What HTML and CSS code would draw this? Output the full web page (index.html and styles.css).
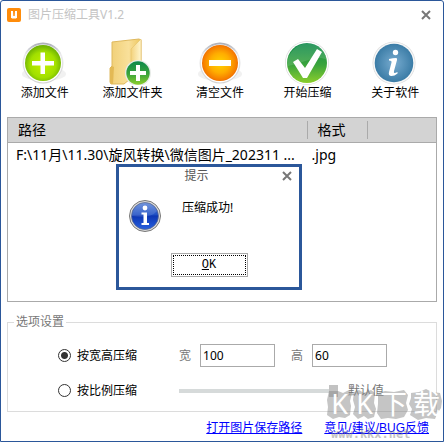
FILE: index.html
```html
<!DOCTYPE html>
<html lang="zh-CN">
<head>
<meta charset="utf-8">
<title>图片压缩工具V1.2</title>
<link rel="stylesheet" href="styles.css">
</head>
<body>
<main class="window">
  <header class="titlebar">
    <svg class="logo" viewBox="0 0 14 14" aria-hidden="true"><rect width="14" height="14" rx="2" fill="#ff8c0a"/><path d="M4 3h6v6.500l-1 1H5l-1-1z" fill="#fff"/><path d="M6 3h2l-.3 5H6.300z" fill="#ff8c0a"/></svg>
    <h1 class="title">图片压缩工具V1.2</h1>
    <button class="close" aria-label="关闭"><svg viewBox="0 0 10 10"><path d="M1 1l8 8M9 1L1 9" stroke="#777" stroke-width="2"/></svg></button>
  </header>

  <nav class="toolbar">
    <button class="tool">
      <svg class="tool-icon" viewBox="0 0 48 48" aria-hidden="true">
        <defs>
          <radialGradient id="lime" cx=".5" cy=".55" r=".55"><stop offset="0" stop-color="#c4f000"/><stop offset=".65" stop-color="#a2e000"/><stop offset="1" stop-color="#69ad05"/></radialGradient>
          <linearGradient id="rim" x1="0" y1="0" x2="0" y2="1"><stop offset="0" stop-color="#a9acb5"/><stop offset=".3" stop-color="#ececee"/><stop offset="1" stop-color="#d2d2d2"/></linearGradient>
        </defs>
        <ellipse cx="23" cy="37" rx="22" ry="7" fill="#f1f1f1"/>
        <circle cx="22" cy="26" r="20.500" fill="url(#rim)"/><circle cx="22" cy="26.500" r="19" fill="#fff"/>
        <circle cx="22" cy="26" r="18" fill="url(#lime)"/>
        <path d="M19.500 15.500h4.500v8.500H33v4.500h-9V37h-4.500v-8.500H11V24h8.500z" fill="#fff"/>
      </svg>
      <span>添加文件</span>
    </button>
    <button class="tool">
      <svg class="tool-icon" viewBox="0 0 48 48" aria-hidden="true">
        <defs>
          <linearGradient id="folder"><stop offset="0" stop-color="#f0cf76"/><stop offset=".6" stop-color="#f9e09a"/><stop offset="1" stop-color="#edc75f"/></linearGradient>
          <linearGradient id="flap"><stop offset="0" stop-color="#f3d27c"/><stop offset="1" stop-color="#fff6cf"/></linearGradient>
          <linearGradient id="green" x1="0" y1="0" x2="0" y2="1"><stop offset="0" stop-color="#0c884b"/><stop offset=".55" stop-color="#3ba43c"/><stop offset="1" stop-color="#8bce2c"/></linearGradient>
        </defs>
        <path d="M4 5l27-3 2 1v30L16 47H3l-1-2V31l2-2z" fill="url(#folder)" stroke="#dfb95e"/>
        <path d="M23 12L33 2v28l-10 9z" fill="url(#flap)" stroke="#e4c169" stroke-width=".6"/>
        <path d="M2 31l2-2 2 1-1 17H3l-1-2z" fill="#e3b955"/>
        <circle cx="30" cy="36" r="13" fill="#e7ebe7"/><circle cx="30" cy="36" r="11.700" fill="url(#green)"/>
        <path d="M28 28h4v6h6v4h-6v6h-4v-6h-6v-4h6z" fill="#fff"/>
      </svg>
      <span>添加文件夹</span>
    </button>
    <button class="tool">
      <svg class="tool-icon" viewBox="0 0 48 48" aria-hidden="true">
        <defs><radialGradient id="orange" cx=".5" cy=".5" r=".55"><stop offset="0" stop-color="#ffd400"/><stop offset=".5" stop-color="#ffad00"/><stop offset=".85" stop-color="#f67c00"/><stop offset="1" stop-color="#d95700"/></radialGradient></defs>
        <ellipse cx="24" cy="37" rx="22" ry="7" fill="#f1f1f1"/>
        <circle cx="24" cy="26" r="20.500" fill="url(#rim)"/><circle cx="24" cy="26.500" r="19" fill="#fff"/>
        <circle cx="24" cy="26" r="18" fill="url(#orange)"/>
        <path d="M13 23h22v6H13z" fill="#fff"/>
      </svg>
      <span>清空文件</span>
    </button>
    <button class="tool">
      <svg class="tool-icon" viewBox="0 0 48 48" aria-hidden="true">
        <circle cx="23" cy="26" r="22" fill="#ddd"/><circle cx="23" cy="26" r="21.300" fill="#fff"/>
        <circle cx="23" cy="26" r="20" fill="url(#green)"/>
        <path d="M3 26C5 14 13 7 24 6c11 1 17 8 19 17-11-6-24 4-39 6z" fill="#fff" opacity=".13"/>
        <path d="M9 25l5-3 7 9 12-19 5 3-15 26h-4z" fill="#fff"/>
      </svg>
      <span>开始压缩</span>
    </button>
    <button class="tool">
      <svg class="tool-icon" viewBox="0 0 48 48" aria-hidden="true">
        <defs><radialGradient id="steel"><stop offset="0" stop-color="#78acd0"/><stop offset="1" stop-color="#3b7ca6"/></radialGradient></defs>
        <circle cx="23" cy="26" r="21.500" fill="#ddd"/><circle cx="23" cy="26" r="20.800" fill="#f8f8f8"/>
        <circle cx="23" cy="26" r="19.300" fill="url(#steel)"/>
        <circle cx="24.500" cy="15.500" r="2.700" fill="#fff"/>
        <path d="M18 22q4-1 7-1 1.500 0 1 2l-3 11q-.5 2.500 1 2l2.500-1v1.500q-3 2.500-6 2.500-3.500 0-2.500-4l2.500-9.500q.5-2-2.500-2z" fill="#fff"/>
      </svg>
      <span>关于软件</span>
    </button>
  </nav>

  <section class="files">
    <table class="file-table">
      <thead><tr><th class="col-path"><span>路径</span></th><th class="col-format"><span>格式</span></th><th></th></tr></thead>
      <tbody><tr><td>F:\11月\11.30\旋风转换\微信图片_202311 ...</td><td class="format">.jpg</td><td></td></tr></tbody>
    </table>
  </section>

  <fieldset class="options">
    <legend>选项设置</legend>
    <div class="option-row">
      <label class="mode"><input type="radio" name="mode" checked>按宽高压缩</label>
      <label class="dimension">宽<input type="text" value="100"></label>
      <label class="dimension">高<input type="text" value="60"></label>
    </div>
    <div class="option-row">
      <label class="mode"><input type="radio" name="mode">按比例压缩</label>
      <input class="ratio" type="range" min="0" max="100" value="100" aria-label="比例">
      <span class="default">默认值</span>
    </div>
  </fieldset>

  <footer class="links"><a href="#path">打开图片保存路径</a><a href="#feedback">意见/建议/BUG反馈</a></footer>

  <section class="dialog" role="dialog" aria-labelledby="dialog-title">
    <header class="dialog-head">
      <h2 id="dialog-title">提示</h2>
      <button class="close" aria-label="关闭提示"><svg viewBox="0 0 10 10"><path d="M1 1l8 8M9 1L1 9" stroke="#777" stroke-width="2"/></svg></button>
    </header>
    <div class="dialog-body">
      <svg class="info" viewBox="0 0 32 32" aria-hidden="true">
        <defs><linearGradient id="blue" x1="0" y1="0" x2="0" y2="1"><stop offset="0" stop-color="#5d85d8"/><stop offset=".45" stop-color="#1e4fc4"/><stop offset=".5" stop-color="#0c36b3"/><stop offset="1" stop-color="#2860df"/></linearGradient></defs>
        <circle cx="16" cy="16" r="15.500" fill="#ddd" stroke="#777"/><circle cx="16" cy="16" r="13.500" fill="url(#blue)" stroke="#5a6685" stroke-width=".7"/>
        <path d="M3 16A13 13 0 0 1 28 11Q22 19 3 16z" fill="#fff" opacity=".13"/>
        <circle cx="16" cy="8" r="2.400" fill="#fff"/><path d="M12.500 12.500H18v10.500h2v2h-7.500v-2h2v-8.500h-2z" fill="#fff"/>
      </svg>
      <p>压缩成功!</p>
    </div>
    <button class="ok"><u>O</u>K</button>
  </section>

  <div class="watermark" aria-hidden="true">
    <svg class="blobs" viewBox="0 0 116 34"><path d="M2 4h9l5 2 6-3 3 3-2 8 1 5-1 9-5 3-6-1-6 2-6-4 1-8-1-7zM27 5l5-2 5 3 7-3 4 3-1 10 2 6-2 8-6 2-4-3-6 3-5-5 2-7-2-7zM51 6l7-2 9 1 10-2 4 5-2 8 2 7-4 7-8 2-8-1-7 1-4-6 1-9zM84 6l8-1 7-3 6 3 8 1 2 8-1 7-4 6-2 5-9-1-8 2-8-5 2-6-3-5 2-6z"/></svg>
    <span class="mark-name"><span>K</span><span>K</span><span>下</span><span>载</span></span>
    <span class="mark-site">www.kkx.net</span>
  </div>
</main>
</body>
</html>
```
FILE: styles.css
```css
* { box-sizing: border-box; }
body { margin: 0; }
body, button, input { font-family: "Noto Sans", "Noto Sans CJK SC", sans-serif; font-size: 12px; line-height: 16px; }
button { padding: 0; border: 0; background: none; color: #000; }
h1, h2, p { margin: 0; font-size: 12px; font-weight: 400; }

.window {
  position: relative;
  display: flex;
  flex-direction: column;
  min-height: 100vh;
  border: 1px solid #2b579a;
  border-radius: 3px 3px 0 0;
  background: #fff;
}

.titlebar { display: flex; align-items: center; gap: 7px; height: 28px; padding: 0 12px 0 6px; }
.logo { width: 14px; height: 14px; }
.title { flex: 1; color: #c4c4c4; }
.close { display: flex; }
.close svg { width: 10px; height: 10px; }

.toolbar { display: grid; grid-template-columns: repeat(5, 1fr); padding: 8px 4px 0 0; }
.tool { display: flex; flex-direction: column; align-items: center; }
.tool-icon { width: 48px; height: 48px; }

.files { flex: 1; margin: 16px 6px 0; border: 1px solid #aaa; }
.file-table { width: 100%; border-collapse: collapse; table-layout: fixed; font-size: 14px; line-height: 22px; text-align: left; white-space: nowrap; }
.file-table th { height: 24px; padding: 3px 0; border-bottom: 1px solid #aaa; background: #d3d3d3; font-weight: 400; line-height: 18px; }
.file-table th span { display: block; padding-left: 10px; border-right: 1px solid #aaa; }
.file-table td { padding: 1px 0 0 8px; overflow: hidden; }
.file-table .format { padding-left: 4px; }
.col-path { width: 70%; }
.col-format { width: 14%; }

.options { min-width: 0; margin: 12px 6px 0; padding: 8px 6px 3px; border: 1px solid #dcdcdc; color: #777; }
.options legend { padding: 0 2px; }
.option-row { display: flex; align-items: center; height: 35px; padding-left: 44px; }
.mode { display: flex; align-items: center; gap: 6px; width: 121px; color: #000; }
.mode input { appearance: none; width: 13px; height: 13px; margin: 0; border: 1px solid #333; border-radius: 50%; background: #fff; }
.mode input:checked { background: radial-gradient(circle, #333 3px, #fff 4px); }
.dimension { display: flex; align-items: center; gap: 9px; margin-right: 16px; }
.dimension input { width: 75px; height: 23px; padding: 0 2px; border: 1px solid #aaa; }
.ratio { appearance: none; width: 159px; height: 12px; margin: 0 10px 0 0; background: linear-gradient(#d6dada, #d6dada) center / 100% 4px no-repeat; }
.ratio::-webkit-slider-thumb { appearance: none; width: 9px; height: 12px; background: #c2c2c2; }

.links { display: flex; justify-content: flex-end; gap: 22px; padding: 8px 14px 5px; font-family: "Liberation Sans", "Noto Sans CJK SC", sans-serif; }
.links a { color: #00f; }

.dialog { position: absolute; top: 163px; left: 115px; width: 186px; height: 126px; border: 3px solid #2b579a; background: #fff; text-align: center; }
.dialog-head { display: flex; align-items: center; padding: 1px 7px 0 0; color: #555; }
.dialog-head h2 { flex: 1; padding-right: 8px; }
.dialog-body { display: flex; gap: 21px; padding: 16px 10px 0; }
.info { width: 32px; height: 32px; }
.ok { width: 77px; height: 24px; margin-top: 21px; border: 1px solid #aaa; outline: 1px dotted #000; outline-offset: -3px; font-family: "Liberation Mono", monospace; }

.watermark { position: absolute; right: 0; bottom: 0; width: 116px; height: 54px; pointer-events: none; }
.blobs { display: block; width: 116px; height: 34px; fill: #8c8c8c; opacity: .5; }
.mark-name { position: absolute; top: 0; left: 0; display: grid; grid-template-columns: 25px 25px 33px 33px; color: #fff; font-size: 27px; line-height: 34px; text-align: center; }
.mark-site { position: absolute; left: 4px; bottom: 0; color: #888; font: bold 12px/14px "DejaVu Sans Mono", monospace; opacity: .5; }
```
